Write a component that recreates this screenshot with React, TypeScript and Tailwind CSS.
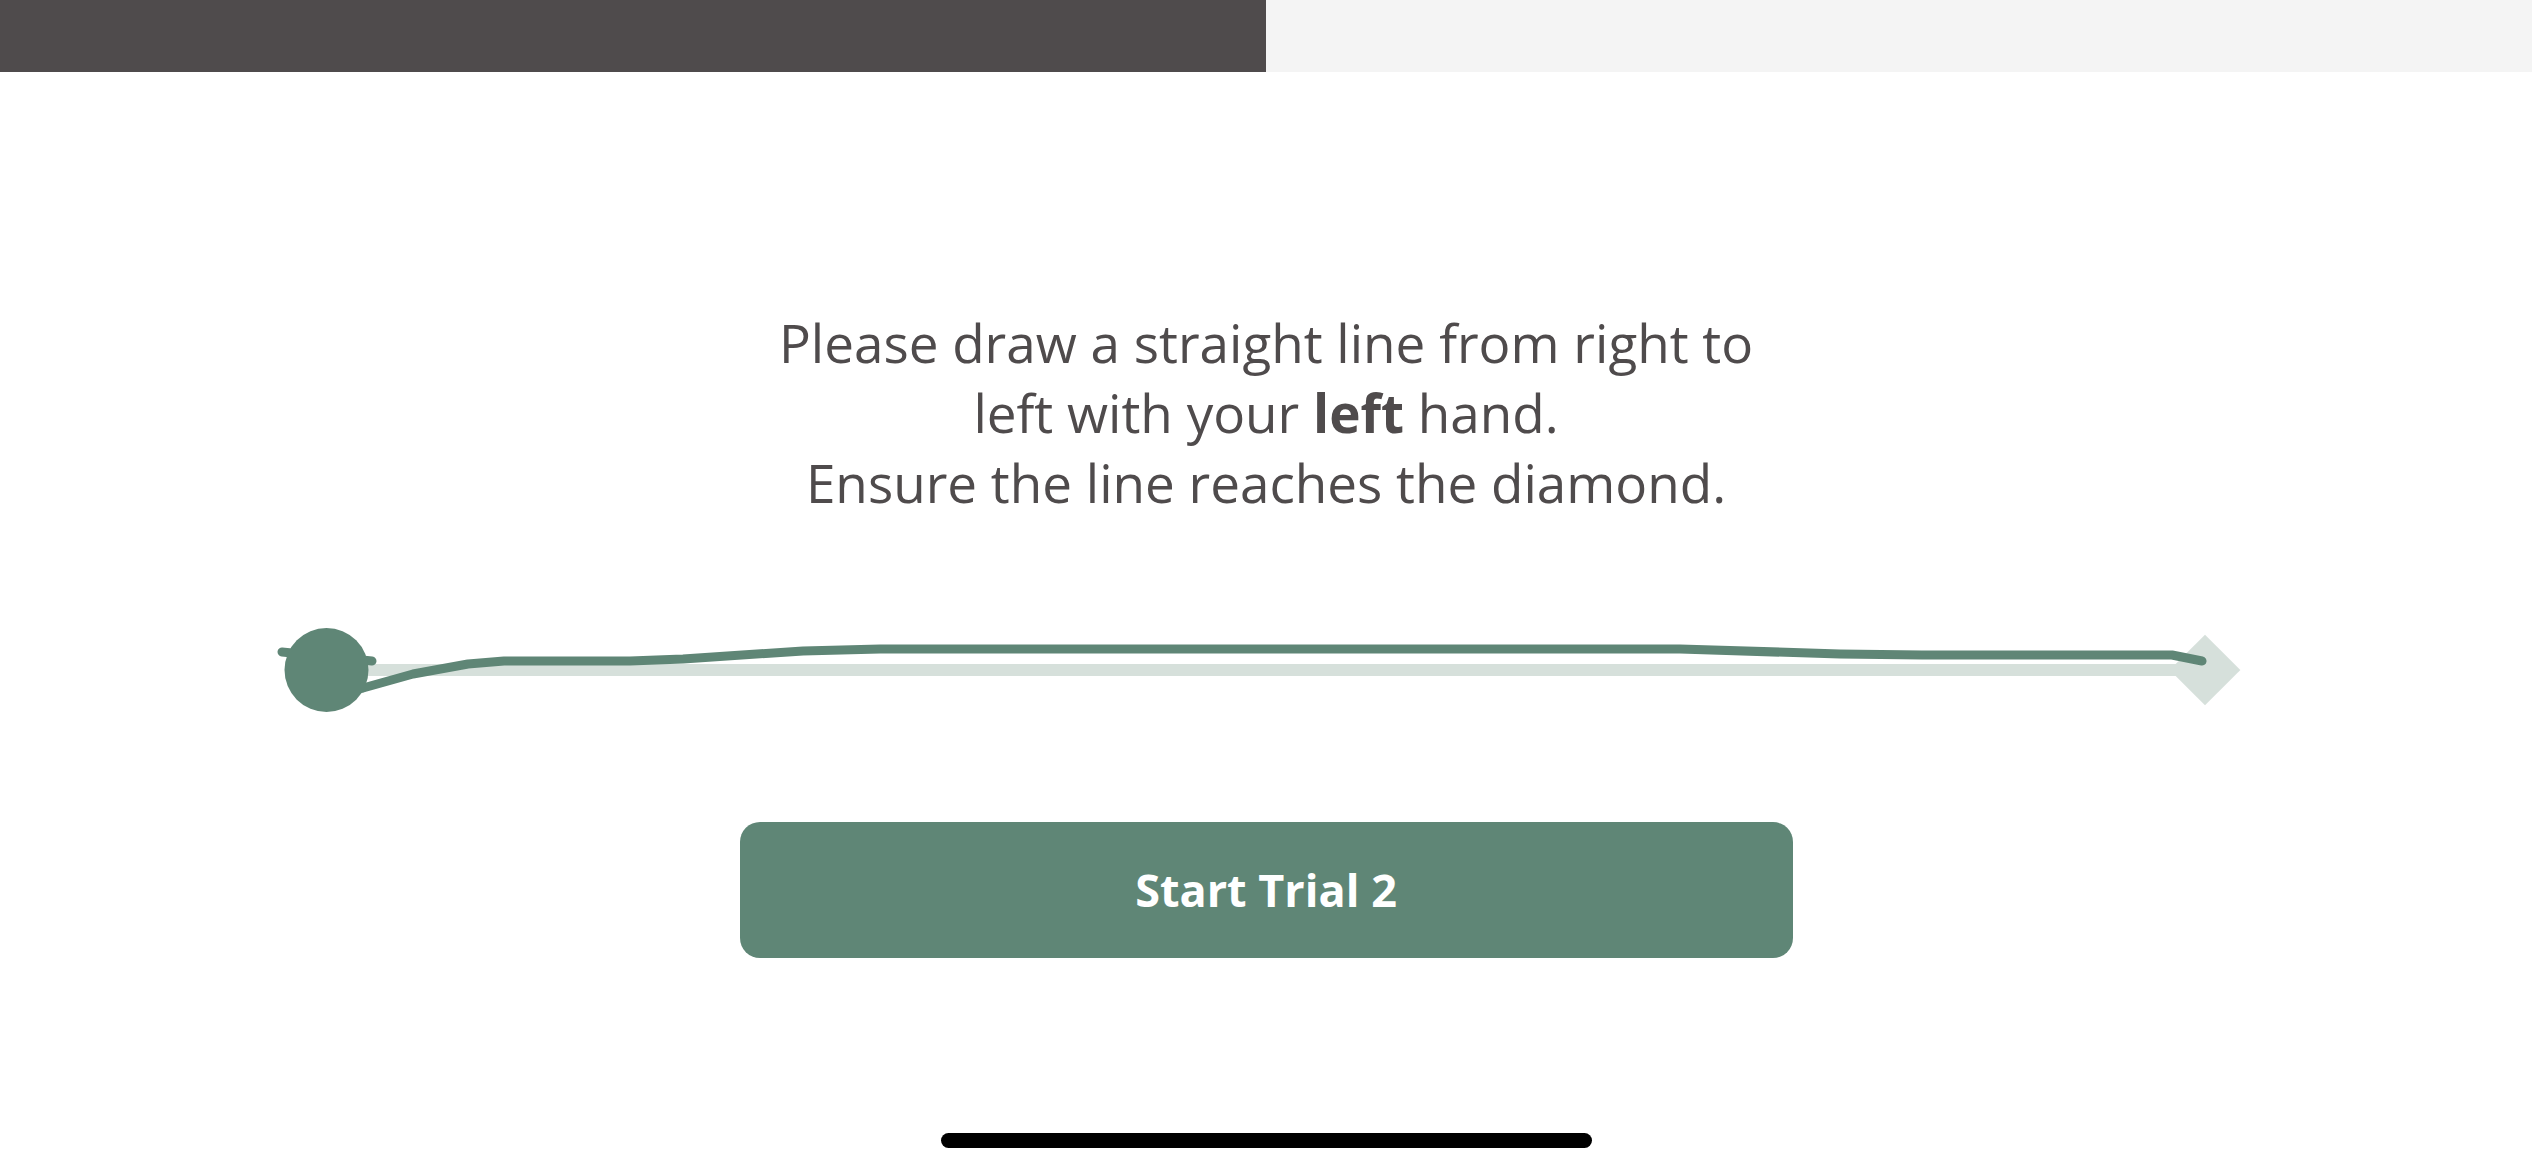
import React from "react";

export default function App() {
  return (
    <div className="w-[2532px] h-[1170px] bg-white flex flex-col overflow-hidden" style={{ fontFamily: '"Open Sans", "Noto Sans", sans-serif' }}>
      <div className="flex h-[72px] w-full shrink-0">
        <div className="w-[1266px] h-full bg-[#4f4b4c]" />
        <div className="flex-1 h-full bg-[#f4f4f4]" />
      </div>

      <div className="mt-[236px] flex flex-col items-center text-[#4f4b4c] text-[53px] leading-[70px] text-center">
        <p>Please draw a straight line from right to</p>
        <p>
          left with your <span className="font-bold">left</span> hand.
        </p>
        <p>Ensure the line reaches the diamond.</p>
      </div>

      <div className="mt-[82px] w-full h-[140px] shrink-0">
        <svg width="2532" height="140" viewBox="0 600 2532 140" className="block">
          <rect x="326" y="664" width="1880" height="12" fill="#d6e0db" />
          <rect x="2180" y="645" width="50" height="50" fill="#d6e0db" transform="rotate(45 2205 670)" />
          <g fill="none" stroke="#5f8676" strokeWidth="9" strokeLinecap="round" strokeLinejoin="round">
            <path d="M 2202 661 L 2172 655 L 1922 655 L 1840 654 L 1680 649 L 880 649 L 803 651 L 683 659 L 630 661 L 504 661 L 468 664 L 413 674 L 363 688 L 330 695" />
            <path d="M 282 652 L 372 661" />
          </g>
          <circle cx="326.5" cy="670" r="42" fill="#5f8676" />
        </svg>
      </div>

      <div className="mt-[82px] flex justify-center">
        <button className="w-[1053px] h-[136px] rounded-[20px] bg-[#5f8676] text-white font-bold text-[45px] flex items-center justify-center">
          Start Trial 2
        </button>
      </div>

      <div className="mt-[175px] flex justify-center">
        <div className="w-[651px] h-[15px] rounded-full bg-black" />
      </div>
    </div>
  );
}
